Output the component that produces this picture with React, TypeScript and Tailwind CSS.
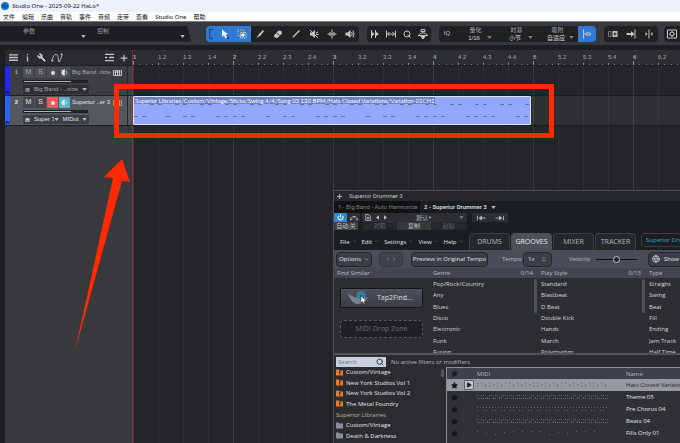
import { useState } from "react";
import type { ReactNode } from "react";
import { ChevronDown, Globe, Search, Star, Wrench, Plus, Play, ChevronLeft, ChevronRight, ChevronsUpDown } from "lucide-react";

const menus = ["文件", "编辑", "乐曲", "音轨", "事件", "音频", "走带", "查看", "Studio One", "帮助"];

const genres = ["Pop/Rock/Country", "Any", "Blues", "Disco", "Electronic", "Funk", "Fusion"];
const styles = ["Standard", "Blastbeat", "D Beat", "Double Kick", "Hands", "March", "Polyrhythm"];
const types = ["Straight", "Swing", "Beat", "Fill", "Ending", "Jam Track", "Half Time"];

const grooves = [
  { name: "Hats Closed Variation 01", seed: 3, gap: 4 },
  { name: "Theme 05", seed: 5, gap: 2 },
  { name: "Pre Chorus 04", seed: 7, gap: 3 },
  { name: "Beats 04", seed: 11, gap: 2 },
  { name: "Fills Only 01", seed: 13, gap: 9 },
];

const clipTop = Array.from({ length: 16 }).flatMap((_, i) => [16 + i * 25, 24 + i * 25]);
const clipBottom = [1, 9, 33, 50, 58, 83, 91, 100, 108, 133, 150, 158, 183, 191, 200, 208, 233, 250, 258, 283, 291, 300, 308, 333, 341, 350, 358, 383, 391];

function Triangle({ className = "" }: { className?: string }) {
  return (
    <svg viewBox="0 0 6 4" className={`h-[3px] w-[5px] shrink-0 fill-[#b9bbbf] ${className}`}>
      <path d="M0 0h6L3 4z" />
    </svg>
  );
}

function Tool({ label, children, className = "w-[18px]" }: { label: string; children: ReactNode; className?: string }) {
  return (
    <button aria-label={label} className={`flex h-4 shrink-0 items-center justify-center text-[#c3c5c8] ${className}`}>
      <svg viewBox="0 0 20 20" className="h-[10px] w-[10px]" fill="none" stroke="currentColor" strokeWidth="2">
        {children}
      </svg>
    </button>
  );
}

function Keys({ className = "" }: { className?: string }) {
  return (
    <svg viewBox="0 0 18 12" className={`shrink-0 ${className}`} fill="none" stroke="currentColor" strokeWidth="2">
      <path d="M1 0v11h16V0M5 0v11M9 0v11M13 0v11" />
      <path d="M5 0v6M9 0v6M13 0v6" strokeWidth="3" />
    </svg>
  );
}

function ToolbarSelect({ label, value }: { label: string; value: string }) {
  return (
    <label className="flex w-[41px] shrink-0 flex-col items-center text-[6px] leading-[8px] text-[#a9abaf]">
      {label}
      <span className="flex w-full items-center justify-end gap-[2px] pr-1">
        <select className="w-[22px] appearance-none text-center leading-[8px] text-[#d5d7da] outline-none">
          <option>{value}</option>
        </select>
        <Triangle className="opacity-60" />
      </span>
    </label>
  );
}

function Toolbar() {
  return (
    <div className="flex h-6 shrink-0 items-center overflow-hidden border-t border-[#77797d] bg-[#38393e]">
      <div className="flex h-4 w-[191px] shrink-0 gap-[11px] bg-[#1c1d20] pl-[23px] text-[6px] text-[#97999d] [clip-path:polygon(0_0,98%_0,100%_100%,0_100%)]">
        <div className="flex w-[63px] justify-between">
          <span className="leading-[10px]">参数</span>
          <Triangle className="mt-[9px]" />
        </div>
        <div className="flex w-[88px] justify-between">
          <span className="leading-[10px]">控制</span>
          <Triangle className="mt-[9px]" />
        </div>
      </div>

      {/* edit tools */}
      <div className="ml-[15px] flex h-4 shrink-0 overflow-hidden rounded-sm bg-[#1f2123]">
        <div className="flex w-[45px] bg-[#2f7bd3]">
          <svg viewBox="0 0 10 16" className="h-4 w-[9px] shrink-0" fill="none" stroke="#1c4b86" strokeWidth="1.4">
            <path d="M8 3H4v10h4" />
          </svg>
          <Tool label="Arrow">
            <path d="M6 1v15l4-4 3 7 3-1-3-7h5z" fill="#fff" stroke="none" />
            <path d="M20 15v5h-5z" fill="#163d70" stroke="none" />
          </Tool>
          <Tool label="Range">
            <path d="M2 2h12v12H2z" strokeDasharray="2 2" />
            <path d="M7 7h11v11H7z" strokeDasharray="3 1" />
            <path d="M10 10h4v4h-4z" fill="#fff" stroke="#fff" />
          </Tool>
        </div>
        <Tool label="Split"><path d="M3 18L8 10l8-8 2 2-7 9z" fill="currentColor" stroke="none" /></Tool>
        <Tool label="Eraser"><path d="M2 13L11 3l6 1 1 5-9 9-6-1z" fill="currentColor" stroke="none" /><path d="M7 8l6 5" stroke="#1f2123" /></Tool>
        <Tool label="Paint"><path d="M3 18l1-4L16 2l2 2L6 16z" fill="currentColor" stroke="none" /></Tool>
        <Tool label="Mute"><path d="M2 7h4l6-5v16l-6-5H2z" fill="currentColor" stroke="none" /><path d="M2 2l16 16M14 8l4-2M14 11h5" /></Tool>
        <Tool label="Bend"><path d="M10 1v18M1 10h5M14 10h5M6 6v8M14 6v8M7 10h6" /></Tool>
        <Tool label="Listen"><path d="M1 7h4l6-5v16l-6-5H1z" fill="currentColor" stroke="none" /><path d="M13 6q3 4 0 8M16 3q4 7 0 14" /></Tool>
      </div>

      <div className="ml-2 flex h-4 shrink-0 overflow-hidden rounded-sm bg-[#1f2123]">
        <Tool label="Step" className="w-4"><path d="M3 2v16M11 2v16" /><path d="M3 5l6 5-6 5zM11 5l7 5-7 5z" fill="currentColor" stroke="none" /></Tool>
        <Tool label="Stretch" className="w-4"><path d="M1 3v14M19 3v14M3 10h14M7 6l-4 4 4 4M13 6l4 4-4 4" /></Tool>
        <Tool label="Quantize" className="w-4"><circle cx="10" cy="10" r="6" /><path d="M11 12l6 5" /></Tool>
        <Tool label="Autoscroll" className="w-4"><path d="M6 1h8v4H6zM1 12q9-9 18 0" /><path d="M0 13h20M6 15h8l-4 5z" fill="currentColor" /></Tool>
      </div>

      <div className="ml-2 flex h-4 shrink-0 items-center overflow-hidden rounded-sm bg-[#1f2123]">
        <button className="w-4 text-[6px] text-[#c3c5c8]">IQ</button>
        <ToolbarSelect label="量化" value="1/16" />
        <ToolbarSelect label="时基" value="小节" />
        <ToolbarSelect label="吸附" value="自适应" />
        <Tool label="Snap" className="w-[18px] bg-[#2f7bd3]"><path d="M3 1v18M3 10h5M8 8h9v4H8z" /></Tool>
      </div>

      <div className="ml-2 flex h-4 shrink-0 overflow-hidden rounded-sm bg-[#1f2123]">
        <Tool label="Ripple"><path d="M1 5h5v10H1z" opacity=".5" /><path d="M9 4h10v12H9z" fill="currentColor" stroke="none" /><path d="M14 7v6M11 10h6" stroke="#1f2123" /></Tool>
        <Tool label="Follow"><path d="M1 8h9V4l7 6-7 6v-4H1z" fill="currentColor" stroke="none" /><path d="M18 1v18" /></Tool>
        <Tool label="Locate"><path d="M10 1v18" /><path d="M3 6l4 4-4 4zM17 6l-4 4 4 4z" fill="currentColor" stroke="none" /></Tool>
      </div>
      <div className="ml-[6px] flex h-4 flex-1 overflow-hidden rounded-l-sm bg-[#1f2123]">
        <Tool label="Macro" className="w-4"><path d="M1 2h18v16H1z" /><circle cx="10" cy="10" r="4" /><path d="M10 4v2M10 14v2M4 10h2M14 10h2" /></Tool>
      </div>
    </div>
  );
}

function TrackSelect({ value, className = "" }: { value: string; className?: string }) {
  return (
    <span className={`flex items-center ${className}`}>
      <select aria-label={value} className="min-w-0 flex-1 appearance-none text-[6px] leading-[9px] outline-none">
        <option>{value}</option>
      </select>
      <Triangle />
    </span>
  );
}

function Track({ n, name, outs, active, bar }: { n: number; name: string; outs: string[]; active?: boolean; bar: string }) {
  const btn = "flex h-[11px] w-[11px] items-center justify-center rounded-[1px]";
  const idle = active ? "bg-[#43464c]" : "bg-[#4b4e53]";
  return (
    <div className={`flex h-[30px] border-b border-[#1d1e20] ${active ? "bg-[#53575e] text-[#e3e5e8]" : "bg-[#3c3e42] text-[#a7a9ad]"}`}>
      <div className={`flex w-[5px] shrink-0 items-end ${bar}`}>
        <svg viewBox="0 0 10 10" className="h-[5px] w-[5px]" fill="none" stroke="#0c1668" strokeWidth="2">
          <path d="M1 8l3-6 3 6 2-6" />
        </svg>
      </div>
      <span className="w-[13px] pt-[2px] text-center text-[6px] font-bold leading-[9px]">{n}</span>
      <div className="flex min-w-0 flex-1 flex-col pt-px">
        <div className="flex items-center gap-px text-[7px]">
          <button className={`${btn} ${idle}`}>M</button>
          <button className={`${btn} ${idle}`}>S</button>
          <button aria-label="Record" className={`${btn} ${active ? "bg-[#f5565a]" : idle}`}>
            <span className="h-1 w-1 rounded-full bg-white/80" />
          </button>
          <button aria-label="Monitor" className={`${btn} ${active ? "bg-[#58b3cc]" : idle}`}>
            <svg viewBox="0 0 10 10" className="h-[7px] w-[7px]" fill="none" stroke="#dfe2e6">
              <path d="M5 1a4 4 0 0 0 0 8z" fill="#dfe2e6" />
              <path d="M7 2q3 3 0 6" />
            </svg>
          </button>
          <span className="ml-px w-10 whitespace-nowrap text-[6px]">{name}</span>
          <Keys className={`h-[6px] w-[9px] ${active ? "text-[#e08146]" : "text-[#c3c5c8]"}`} />
        </div>
        <input
          type="range"
          aria-label={`Volume ${n}`}
          defaultValue={76}
          className="my-[2px] h-[3px] w-[65px] appearance-none border border-[#1d1e20] bg-linear-to-r from-[#aeb0b4] from-75% to-[#26282b] to-75% [&::-webkit-slider-thumb]:appearance-none"
        />
        <div className={`flex h-[9px] w-[66px] items-center gap-1 px-[2px] ${active ? "bg-[#3c3f45]" : "bg-[#2c2e31]"}`}>
          <Keys className="h-1 w-[5px]" />
          {outs.map((o) => (
            <TrackSelect key={o} value={o} className="min-w-0 flex-1" />
          ))}
        </div>
      </div>
      <div className="w-[5px] shrink-0 border-l border-[#26282b]" />
    </div>
  );
}

function TrackList() {
  const svg = { viewBox: "0 0 20 20", fill: "none", stroke: "currentColor", strokeWidth: 2 };
  return (
    <div className="flex w-32 shrink-0 flex-col border-l border-[#1b1c1e] bg-[#38393d]">
      <div className="flex h-4 items-center gap-[5px] border-b border-[#1b1c1e] bg-[#2a2b2e] pl-1 pr-[3px] text-[#c0c2c5]">
        <svg {...svg} className="h-[9px] w-[9px]"><path d="M0 4h20M0 10h20M0 16h20" strokeWidth="3" /></svg>
        <svg {...svg} className="h-[9px] w-[9px]"><path d="M10 8v11M10 2v3" strokeWidth="3" /></svg>
        <Wrench className="h-[9px] w-[9px] -scale-x-100 fill-current" />
        <svg viewBox="0 0 26 20" fill="none" stroke="currentColor" strokeWidth="2" className="h-[9px] w-3">
          <path d="M1 18Q6 2 11 3t5 14 9-15" />
          <circle cx="3" cy="17" r="1.5" /><circle cx="23" cy="3" r="1.5" />
        </svg>
        <svg {...svg} className="ml-auto h-[9px] w-[9px]"><path d="M0 3h20M0 17h20M0 10h5M9 10h11" strokeWidth="3" /></svg>
        <Plus className="h-[10px] w-[10px]" strokeWidth={3} />
      </div>
      <Track n={1} name="Big Band..nize" outs={["Big Band - ..nize"]} bar="bg-[#1f26f5]" />
      <Track n={2} name="Superior ..er 3" outs={["Super 3", "MIDut"]} bar="bg-[#2a62f2]" active />
    </div>
  );
}

function Ruler() {
  return (
    <div className="flex h-4 overflow-hidden border-b border-[#1b1c1e] bg-[#2d2e32] text-[6px] text-[#a4a6aa]">
      {Array.from({ length: 22 }).map((_, i) => {
        const bar = Math.floor(i / 4) + 1;
        const beat = i % 4;
        return (
          <div key={i} className="flex w-[25px] shrink-0 flex-col justify-between pt-1">
            <span className={`h-[7px] leading-[7px] ${beat ? "" : "font-bold"}`}>{beat ? `${bar}.${beat + 1}` : bar}</span>
            <div className="flex h-1 items-end justify-between pr-[5px]">
              <i className={`w-px bg-[#8d8f93] ${beat ? "h-[2px]" : "h-1"}`} />
              <i className="h-px w-px bg-[#77797d]" />
              <i className="h-px w-px bg-[#77797d]" />
              <i className="h-px w-px bg-[#77797d]" />
            </div>
          </div>
        );
      })}
    </div>
  );
}

function Timeline() {
  return (
    <div className="flex min-w-0 flex-1 flex-col border-l border-[#8a2f2f] bg-[#242528]">
      <Ruler />
      <div className="flex-1 bg-[repeating-linear-gradient(90deg,#33353899_0px,#33353899_1px,transparent_1px,transparent_25px),repeating-linear-gradient(90deg,#3d3f43_0px,#3d3f43_1px,transparent_1px,transparent_100px)]">
        <div className="h-[30px] border-b border-[#1b1c1e]" />
        <div className="h-[30px] border-b border-[#1b1c1e] bg-white/5">
          <div className="h-[29px] w-[398px] overflow-hidden rounded-[1px] border border-[#dde3fb] bg-[#91a8fc]">
            <p className="w-fit whitespace-nowrap bg-[#6c80c6] px-px font-[Lato,sans-serif] text-[6px] leading-[7px] text-white">
              Superior Libraries/Custom/Vintage/Sticks/Swing 4/4/Song 03 120 BPM/Hats Closed Variations/Variation 01CH1
            </p>
            <svg viewBox="0 0 397 20" className="h-5 w-[397px]" fill="#60729f">
              {clipTop.map((x) => <rect key={x} x={x} y="0" width="4" height="1" />)}
              {clipBottom.map((x) => <rect key={x} x={x - 1} y="12" width="4" height="1" />)}
            </svg>
          </div>
        </div>
      </div>
    </div>
  );
}

function Column({ title, count, items, className = "" }: { title: string; count?: string; items: string[]; className?: string }) {
  return (
    <div className={`flex flex-col overflow-hidden ${className}`}>
      <div className="flex h-[10px] shrink-0 items-center justify-between bg-[#434650] pr-2 text-[#b9bcc4]">
        <span>{title}</span>
        <span>{count}</span>
      </div>
      <div className="flex h-[75px] overflow-hidden">
        <ul className="grid h-20 flex-1 grid-rows-7 items-center whitespace-nowrap text-[#d4d6da]">
          {items.map((g) => <li key={g}>{g}</li>)}
        </ul>
        {count && <div className="mr-1 mt-px h-[34px] w-[3px] rounded-full bg-[#505259]" />}
      </div>
    </div>
  );
}

function MidiPreview({ seed, gap }: { seed: number; gap: number }) {
  const dots = Array.from({ length: Math.floor(132 / gap) }).map((_, i) => ({
    x: i * gap,
    y: (i * seed) % 7 < 4 ? 1 : ((i * seed) % 3) + 2,
  }));
  return (
    <svg viewBox="0 0 132 7" className="h-[7px] w-[132px]" fill="currentColor">
      {dots.map((d, i) => (
        <g key={i}>
          <rect x={d.x} y={d.y} width="1" height="1" />
          {i % 3 !== 1 && gap < 6 && <rect x={d.x} y="4" width="1" height="1" />}
        </g>
      ))}
    </svg>
  );
}

function Browser() {
  const [query, setQuery] = useState("");
  const folders = [
    { name: "Custom/Vintage", ezx: true },
    { name: "New York Studios Vol 1", ezx: true },
    { name: "New York Studios Vol 2", ezx: true },
    { name: "The Metal Foundry", ezx: true },
    { name: "Superior Libraries", head: true },
    { name: "Custom/Vintage" },
    { name: "Death & Darkness" },
  ];
  return (
    <div className="flex min-h-0 flex-1 flex-col border-t-2 border-[#50535c] bg-[#2b2c30] pt-px">
      <div className="flex h-[11px] shrink-0 items-center gap-[5px] pl-[2px]">
        <label className="flex h-[10px] w-[50px] items-center bg-[#c9cfdf] px-[2px] text-[#3b3e46]">
          <input
            aria-label="Search"
            value={query}
            onChange={(e) => setQuery(e.target.value)}
            placeholder="Search"
            className="min-w-0 flex-1 outline-none placeholder:text-[#6d7280]"
          />
          <Search className="h-2 w-2" strokeWidth={3} />
        </label>
        <span className="text-[#b4b7bd]">No active filters or modifiers</span>
      </div>
      <div className="flex min-h-0 flex-1">
        <ul className="grid h-[74px] w-[107px] shrink-0 grid-rows-7 items-center pl-[2px] text-[#e3e5e8]">
          {folders.map((f, i) => (
            <li key={i} className={`flex items-center gap-[3px] whitespace-nowrap ${f.head ? "text-[#bdb99b]" : ""}`}>
              {!f.head && (
                <svg viewBox="0 0 14 14" className="h-[7px] w-[7px]">
                  <path d="M0 1h5l2 2h7v10H0z" fill={f.ezx ? "#ee7a26" : "#8b8e98"} />
                  {f.ezx && <path d="M6 4h3v4H6zM6 9h3v2H6z" fill="#2b2c30" />}
                </svg>
              )}
              {f.name}
            </li>
          ))}
        </ul>
        <div className="mt-[2px] h-2 w-[3px] shrink-0 rounded-full bg-[#55575e]" />
        <div className="ml-[2px] min-w-0 flex-1 overflow-hidden border-l border-t border-[#8a8d97] bg-[#303136]">
          <table className="w-full table-fixed border-collapse text-left">
            <thead className="bg-[#3e4149] text-[#b4b7bd]">
              <tr className="h-[11px]">
                <th className="w-[30px] pl-1"><Star className="h-[7px] w-[7px] fill-[#1d1e21] text-[#1d1e21]" /></th>
                <th className="w-[149px] font-normal">MIDI</th>
                <th className="font-normal">Name</th>
              </tr>
            </thead>
            <tbody>
              {grooves.map((g, i) => (
                <tr key={g.name} className={`h-3 ${i === 0 ? "bg-[#9699a4] text-[#1f2125]" : "text-[#e3e5e8]"}`}>
                  <td className="pl-1">
                    <span className="flex items-center gap-[6px]">
                      <Star className="h-[7px] w-[7px] fill-[#15161a] text-[#15161a]" />
                      {i === 0 && (
                        <button aria-label="Play" className="flex h-[10px] w-[10px] items-center justify-center rounded-[1px] border border-[#5d606a] bg-[#c0c3cc]">
                          <Play className="h-[6px] w-[6px] fill-current" />
                        </button>
                      )}
                    </span>
                  </td>
                  <td className={i === 0 ? "text-[#666973]" : "text-[#65686f]"}><MidiPreview seed={g.seed} gap={g.gap} /></td>
                  <td className="whitespace-nowrap">{g.name}</td>
                </tr>
              ))}
            </tbody>
          </table>
        </div>
      </div>
    </div>
  );
}

function DrummerWindow() {
  const [tab, setTab] = useState("GROOVES");
  const raised = "flex h-[15px] items-center justify-center rounded-sm border border-[#25272c] bg-[#3b3e46] text-[#e0e2e6]";
  return (
    <section className="absolute bottom-0 left-[333px] right-0 top-[190px] flex flex-col overflow-hidden border-l border-t border-[#4b4d52] bg-[#1b1e21] font-['Open_Sans',sans-serif] text-[6px] leading-[8px]">
      <div className="flex h-[10px] shrink-0 items-center gap-[6px] bg-[#26282b] pl-[2px] font-[Roboto,sans-serif] text-[#c0c2c5]">
        <Plus className="h-[7px] w-[7px]" strokeWidth={3} />
        Superior Drummer 3
      </div>
      <div className="flex h-3 shrink-0 font-[Roboto,sans-serif]">
        <button className="w-[86px] whitespace-nowrap bg-[#111214] pl-1 text-left text-[#7b7e83]">1 - Big Band - Auto Harmonize</button>
        <button className="flex items-center gap-1 whitespace-nowrap pl-1 font-medium text-[#dfe1e4]">
          2 - Superior Drummer 3 <Triangle />
        </button>
      </div>
      <div className="flex h-[9px] shrink-0 items-center text-[#b9bbbf]">
        <button aria-label="Power" className="flex h-[9px] w-[13px] items-center justify-center bg-[#2f86cf] text-white">
          <svg viewBox="0 0 12 12" className="h-[7px] w-[7px]" fill="none" stroke="currentColor" strokeWidth="1.8"><path d="M3 3a4.200 4.200 0 1 0 6 0M6 0v6" /></svg>
        </button>
        <button aria-label="Bypass" className="flex h-[9px] w-[13px] items-center justify-center bg-[#2c2e32]">
          <svg viewBox="0 0 14 10" className="h-[6px] w-2" fill="none" stroke="currentColor" strokeWidth="1.6"><path d="M1 8V6q6-8 12 0v2M0 8h4M10 8h4M7 3v3" /></svg>
        </button>
        <button aria-label="Preset file" className="ml-[2px] flex h-[9px] w-[11px] items-center justify-center bg-[#2c2e32]">
          <svg viewBox="0 0 10 12" className="h-[7px] w-[6px]" fill="none" stroke="currentColor" strokeWidth="1.5"><path d="M1 1h5l3 3v7H1zM3 6h4M3 8h4" /></svg>
        </button>
        <button aria-label="Previous preset" className="flex h-[9px] w-2 items-center justify-center bg-[#2c2e32]"><Triangle className="rotate-90" /></button>
        <button aria-label="Next preset" className="flex h-[9px] w-2 items-center justify-center bg-[#2c2e32]"><Triangle className="-rotate-90" /></button>
        <span className="flex h-[9px] w-[78px] items-center bg-[#2c2e32] pr-[3px]">
          <select aria-label="Preset" className="flex-1 appearance-none text-center font-['Noto_Sans','Noto_Sans_CJK_SC',sans-serif] outline-none"><option>默认*</option></select>
          <Triangle className="opacity-50" />
        </span>
        <button aria-label="Send start" className="ml-[5px] flex h-[9px] w-[18px] items-center justify-center bg-[#2c2e32]">
          <svg viewBox="0 0 16 10" className="h-[6px] w-[9px]" fill="currentColor" stroke="currentColor" strokeWidth="1.6"><path d="M1 1v8M5 5h10M8 2L4 5l4 3z" /></svg>
        </button>
        <button aria-label="Send end" className="flex h-[9px] w-[18px] items-center justify-center bg-[#2c2e32]">
          <svg viewBox="0 0 16 10" className="h-[6px] w-[9px]" fill="currentColor" stroke="currentColor" strokeWidth="1.6"><path d="M1 5h10M8 2l4 3-4 3zM15 1v8" /></svg>
        </button>
      </div>
      <div className="flex h-2 shrink-0 items-center font-['Noto_Sans','Noto_Sans_CJK_SC',sans-serif] leading-[8px]">
        <button className="h-2 w-6 bg-[#3d3f43] text-[#c0c2c5]">自动:关</button>
        <button className="ml-1 h-2 w-[35px] bg-[#25272a] text-[#5d6065]">对照</button>
        <button className="h-2 w-[34px] bg-[#36383c] text-[#c0c2c5]">复制</button>
        <button className="h-2 w-[35px] bg-[#25272a] text-[#5d6065]">粘贴</button>
      </div>

      <nav className="mt-[3px] flex h-[17px] shrink-0 items-stretch overflow-hidden text-[#e0e2e6]">
        <div className="flex w-[135px] shrink-0 items-center gap-[5px] pl-[6px]">
          {["File", "Edit", "Settings", "View", "Help"].map((m) => (
            <button key={m} className="flex items-center gap-[2px]">
              {m} <ChevronDown className="h-[5px] w-[5px] text-[#8a8d93]" />
            </button>
          ))}
        </div>
        {["DRUMS", "GROOVES", "MIXER", "TRACKER"].map((t) => (
          <button
            key={t}
            onClick={() => setTab(t)}
            className={`mr-px w-[41px] shrink-0 rounded-t-sm border border-b-0 text-[7px] ${tab === t ? "border-[#4c505a] bg-[#4c505a] text-[#e6e8ec]" : "border-[#3b3e44] bg-[#25272b] text-[#b5b8be]"}`}
          >
            {t}
          </button>
        ))}
        <button className="mb-[3px] ml-1 w-20 shrink-0 whitespace-nowrap rounded-l-sm border border-[#3b3e44] pl-1 text-left text-[#2fa9cc]">Superior Drummer</button>
      </nav>

      <div className="flex h-[18px] shrink-0 items-center overflow-hidden bg-[#4a4d57] pl-[2px] text-[#b9bcc4]">
        <button className={`${raised} w-9 shrink-0 gap-[3px]`}>Options <ChevronDown className="h-[5px] w-[5px]" /></button>
        <div className={`${raised} ml-[7px] w-6 shrink-0 justify-around opacity-60`}>
          <button aria-label="Back"><ChevronLeft className="h-[6px] w-[6px]" /></button>
          <button aria-label="Forward"><ChevronRight className="h-[6px] w-[6px]" /></button>
        </div>
        <button className={`${raised} ml-2 w-[77px] shrink-0 whitespace-nowrap`}>Preview in Original Tempo</button>
        <label htmlFor="tempo" className="ml-[14px] w-[21px] shrink-0">Tempo</label>
        <span className={`${raised} w-[29px] shrink-0 px-1`}>
          <select id="tempo" className="min-w-0 flex-1 appearance-none outline-none"><option>1x</option></select>
          <ChevronsUpDown className="h-[7px] w-[6px]" />
        </span>
        <label htmlFor="velocity" className="ml-[17px] w-[27px] shrink-0">Velocity</label>
        <input
          id="velocity"
          type="range"
          className="h-px w-[41px] shrink-0 appearance-none bg-[#0e0f11] [&::-webkit-slider-thumb]:size-[7px] [&::-webkit-slider-thumb]:appearance-none [&::-webkit-slider-thumb]:rounded-full [&::-webkit-slider-thumb]:border [&::-webkit-slider-thumb]:border-[#c3c6ce] [&::-webkit-slider-thumb]:bg-[#22242a]"
        />
        <button className={`${raised} ml-[11px] w-20 shrink-0 justify-start gap-1 pl-[3px]`}><Globe className="h-2 w-2" /> Show</button>
      </div>

      <div className="flex h-[85px] shrink-0 bg-[#2d2e32]">
        <div className="w-[99px] shrink-0">
          <div className="flex h-[10px] items-center bg-[#434650] pl-[3px] text-[#b9bcc4]">Find Similar</div>
          <div className="flex flex-col gap-3 py-[10px] pl-[6px] pr-[10px]">
            <button className="flex h-5 items-center gap-[7px] rounded-[1px] border border-[#15161a] bg-linear-to-b from-[#4d515b] to-[#3a3d45] pl-[7px] text-[7px] text-[#dcdee2]">
              <svg viewBox="0 0 44 28" className="h-[14px] w-[22px]">
                <path d="M0 5q4 14 14 20 14 5 28-14-8 4-13 4Q12 14 0 5z" fill="#7b808b" />
                <circle cx="26" cy="9" r="8" fill="#2b5f75" stroke="#33a6cb" strokeWidth="2" />
                <circle cx="26" cy="9" r="4" fill="none" stroke="#33a6cb" strokeWidth="2" />
                <path d="M26 10v14l3-3 3 5 2-1-2-5h5z" fill="#fff" stroke="#222" />
              </svg>
              Tap2Find...
            </button>
            <div className="flex h-[18px] items-center justify-center rounded-sm border border-dashed border-[#55585f] bg-[#1f2023] text-[7px] text-[#6b6e76]">MIDI Drop Zone</div>
          </div>
        </div>
        <Column title="Genre" count="0/14" items={genres} className="w-[108px] shrink-0" />
        <Column title="Play Style" count="0/13" items={styles} className="w-[108px] shrink-0" />
        <Column title="Type" items={types} className="min-w-0 flex-1" />
      </div>
      <Browser />
    </section>
  );
}

export default function App() {
  return (
    <main className="relative flex h-screen flex-col overflow-hidden bg-[#1d1e20] font-['Liberation_Sans','Noto_Sans_CJK_SC',sans-serif]">
      <header className="flex h-3 shrink-0 items-center gap-[3px] bg-[#edf1f9] pl-px font-['Noto_Sans',sans-serif] text-[6px] text-[#222]">
        <svg viewBox="0 0 16 16" className="h-2 w-2">
          <circle cx="8" cy="8" r="8" fill="#1c7fd6" />
          <path d="M3 6v4M5.500 4v8M8 2v12M10.500 4v8M13 6v4" stroke="#0b3157" strokeWidth="1.200" />
        </svg>
        Studio One - 2025-09-22 HaLo*
      </header>
      <nav className="flex h-[9px] shrink-0 items-center gap-[7px] bg-white pl-[3px] font-['Noto_Sans','Noto_Sans_CJK_SC',sans-serif] text-[6px] leading-[8px] text-[#111]">
        {menus.map((m) => <button key={m} className="shrink-0">{m}</button>)}
      </nav>
      <Toolbar />
      <div className="mt-[5px] flex min-h-0 flex-1 pl-1">
        <TrackList />
        <Timeline />
      </div>

      <DrummerWindow />

      {/* annotation */}
      <div className="absolute left-[114px] top-[84px] h-[54px] w-[440px] border-[5px] border-[#ff2a04]" />
      <svg viewBox="0 0 60 194" className="absolute left-[74px] top-[158px] h-[194px] w-[60px]" fill="#ff2a04">
        <path d="M48 1L30 19l9 1L1 193l47-170 8 1z" />
      </svg>
    </main>
  );
}
